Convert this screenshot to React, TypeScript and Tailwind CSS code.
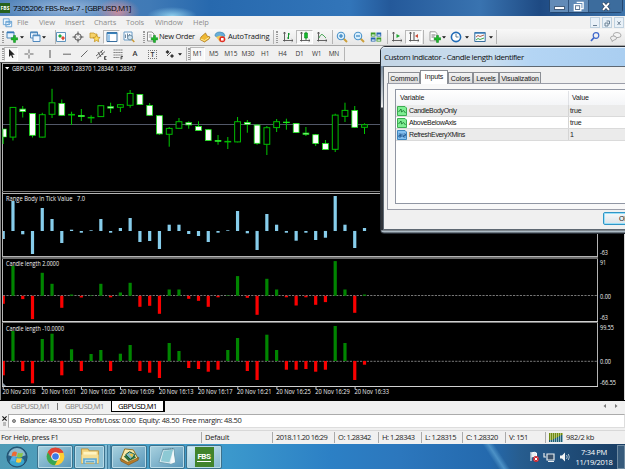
import type { ReactNode } from "react";

// [bodyTop, bodyBottom, high, low, filled]
const CANDLES: [number, number, number, number, number][] = [
  [129, 137, 129, 144, 1],
  [107, 137.5, 107, 140.5, 0],
  [108.7, 112, 106, 117.5, 1],
  [113, 135.7, 113, 137.5, 1],
  [114.3, 137.5, 112.8, 137.5, 0],
  [102.4, 114.7, 88.8, 118, 0],
  [103, 115.7, 99.5, 115.7, 1],
  [114, 115.4, 111.7, 125, 0],
  [115, 117, 109, 121, 1],
  [117, 118, 115.3, 123, 0],
  [105.3, 117, 105.3, 117, 0],
  [106.3, 108.5, 102.7, 113, 1],
  [104.3, 107.7, 104.3, 112, 0],
  [93, 105.7, 90, 107.7, 0],
  [94, 105, 94, 105, 1],
  [105, 115.7, 103, 115.7, 1],
  [115.3, 134.3, 115.3, 134.8, 1],
  [128, 134.7, 127, 146.7, 0],
  [121.3, 128.7, 118, 128.7, 0],
  [122.3, 125.3, 121.3, 128.7, 1],
  [126, 131, 121.3, 131, 1],
  [129.3, 141, 129, 141, 1],
  [140, 141.7, 135, 144.7, 1],
  [141, 142, 137, 149, 0],
  [121.3, 142.3, 117, 142.3, 0],
  [122, 124.7, 120, 132.7, 1],
  [124.7, 143.7, 124, 144.7, 1],
  [127.3, 144.7, 126, 155, 0],
  [121.3, 128, 119, 132, 0],
  [121.7, 123, 118.7, 129.7, 1],
  [123, 133, 123, 133, 1],
  [132.7, 134.7, 127, 136, 1],
  [134.3, 144, 134, 146, 1],
  [143, 150, 140, 150, 1],
  [114.7, 149.7, 113.7, 152, 0],
  [110, 116.7, 102.7, 122, 0],
  [110, 127.7, 106, 127.7, 1],
  [124.3, 127.7, 123.3, 134, 0],
];

const RANGE = [
  -8, 30, -3.3, -23, 23, 12, -12, 1.3, -1.7, 0.7, 12, -1.7, 3, 13, -11, -10, -18, 6.3, 6.3, -3, -5, -11, -1.7, 0.7, 20,
  -2.3, -19, 17, 6.3, -1.7, -9.7, -1.7, -9, -6.7, 35, 6.3, -17, 3,
];

const LENGTHS = [
  -8, 30, -3.3, -23.3, 23, 12, -12, 1.3, -1.7, 0.5, 12, -1.5, 3.3, 13, -11, -10, -18, 6.3, 6.3, -3, -5, -11, -1.5, 0.5,
  19.7, -2, -19, 17, 6.3, -1.5, -9.7, -1.5, -9, -6.3, 34.7, 6.3, -17, 1.3,
];

const LENGTHS_NEG = [
  -14.3, 30, -10, -22.3, 22, 27.3, -14.3, 11.7, -10, 7, 11, -10, 7.3, 16, -10, -11.7, -17, 18, 10, -7, -8, -10.7, -8.7,
  11, 23, -10, -19, 26.3, 11, -8.7, -8.7, -8, -10.7, -8.7, 35, 18, -19, -3.7,
];

const TIMES = ["2018", "16:01", "16:05", "16:09", "16:13", "16:17", "16:21", "16:25", "16:29", "16:33"];

const barX = (i: number) => 3.2 + i * 9.765;

function Bars({ data, base, up, down }: { data: number[]; base: number; up: string; down: string }) {
  return (
    <g>
      {data.map((v, i) => (
        <rect
          key={i}
          x={i === 0 ? 3 : barX(i) - 1.6}
          width={i === 0 ? 1.8 : 3.2}
          y={v > 0 ? base - v : base}
          height={Math.abs(v)}
          fill={v > 0 ? up : down}
        />
      ))}
    </g>
  );
}

function Label({ x, y, w, children }: { x: number; y: number; w: number; children: string }) {
  return (
    <text x={x} y={y} textLength={w} lengthAdjust="spacingAndGlyphs" fill="#f0f0f0" fontSize="6.6" className="whitespace-pre">
      {children}
    </text>
  );
}

function Chart() {
  return (
    <svg
      viewBox="0 62 625 338"
      className="block h-[338px] w-[625px] shrink-0 bg-black font-['Open_Sans',sans-serif] font-medium"
    >
      <rect x="0" y="62" width="1" height="338" fill="#8b8b8b" />
      <rect x="624" y="62" width="1" height="338" fill="#d8d8d8" />
      <rect x="0" y="62" width="625" height="1" fill="#555" />
      <g fill="#b4b4b4">
        <rect x="2" y="63" width="596" height="1" />
        <rect x="2" y="63" width="1" height="324" />
        <rect x="597" y="63" width="1" height="324" />
        <rect x="2" y="191" width="596" height="1" fill="#777" />
        <rect x="2" y="193" width="596" height="1" />
        <rect x="2" y="256" width="596" height="1" />
        <rect x="2" y="257" width="596" height="1" fill="#6b6b6b" />
        <rect x="2" y="258" width="596" height="1" fill="#6b6b6b" />
        <rect x="2" y="321" width="596" height="1" fill="#d0d0d0" />
        <rect x="2" y="322" width="596" height="1" fill="#777" />
        <rect x="2" y="386" width="596" height="1" fill="#d0d0d0" />
      </g>
      <rect x="3" y="124" width="594" height="1" fill="#525868" />
      <path d="M5 67h4.4l-2.2 2.400z" fill="#fff" />
      <Label x={12} y={71.2} w={124}>GBPUSD,M1   1.28360 1.28370 1.28346 1.28367</Label>

      {CANDLES.map(([top, bottom, high, low, filled], i) => {
        const x = barX(i);
        return (
          <g key={i}>
            <rect x={x - 0.5} y={high} width="1" height={low - high} fill="#00c800" />
            {i === 0 ? (
              <rect x="3" y={top} width="3.5" height={bottom - top} fill="#fff" stroke="#00d000" strokeWidth="0.6" />
            ) : (
              <rect
                x={x - 2.9}
                y={top + 0.4}
                width="5.8"
                height={Math.max(bottom - top - 0.8, 0.5)}
                fill={filled ? "#fff" : "#000"}
                stroke={filled ? "#19e619" : "#00bd00"}
                strokeWidth={filled ? 0.8 : 1}
              />
            )}
          </g>
        );
      })}

      <Bars data={RANGE} base={231} up="#87cdeb" down="#87cdeb" />
      <Label x={6} y={201.3} w={79}>Range Body in Tick Value   7.0</Label>

      <path d="M3 295.5H598" stroke="#777" strokeWidth="1" strokeDasharray="2.2 1.2" />
      <Bars data={LENGTHS} base={295.8} up="#008500" down="#fa0000" />
      <Label x={6} y={266} w={53}>Candle length 2.0000</Label>

      <path d="M3 361.3H598" stroke="#777" strokeWidth="1" strokeDasharray="2.2 1.2" />
      <Bars data={LENGTHS_NEG} base={361} up="#008500" down="#fa0000" />
      <Label x={6} y={330.6} w={58}>Candle length -10.0000</Label>

      <path d="M3 383l3 3H3z" fill="#8797a8" />
      {TIMES.map((t, i) => (
        <g key={t}>
          <rect x={2.7 + i * 39.1} y="386" width="1" height="3" fill="#c8c8c8" />
          <Label x={2.5 + i * 39.1} y={394.3} w={i ? 34.5 : 33}>{`20 Nov ${t}`}</Label>
        </g>
      ))}

      <Label x={600} y={255.3} w={8}>-63</Label>
      <Label x={600} y={265.2} w={6}>91</Label>
      <Label x={600} y={298.5} w={11}>0.00</Label>
      <Label x={600} y={320} w={8}>-63</Label>
      <Label x={600} y={329.7} w={14}>99.55</Label>
      <Label x={600} y={363.7} w={11}>0.00</Label>
      <Label x={600} y={384.7} w={16}>-66.55</Label>
    </svg>
  );
}

function Ico({ children, wide, boxed }: { children: ReactNode; wide?: boolean; boxed?: boolean }) {
  return (
    <span
      className={`flex h-[14px] shrink-0 items-center justify-center ${wide ? "w-[14px]" : "w-[17px]"} ${
        boxed ? "border border-[#b9b9b9] border-r-white border-b-white bg-[#f8f8f8]" : ""
      }`}
    >
      <svg viewBox="0 0 12 12" className="h-3 w-3 shrink-0" fill="none">
        {children}
      </svg>
    </span>
  );
}

function Caret() {
  return (
    <svg viewBox="0 0 4 3" className="h-[3px] w-1 shrink-0">
      <path d="M0 .3h4L2 2.6z" fill="#111" />
    </svg>
  );
}

const Grip = () => <span className="h-3 w-[2px] shrink-0 border-x border-dotted border-[#9b9b9b]" />;
const Sep = () => <span className="h-[14px] w-px shrink-0 bg-[#b5b5b5]" />;

const Plus = () => <path d="M7.5 4.5h2v2.2h2.2v2.2H9.5v2.5h-2V8.900H5.200V6.700h2.300z" fill="#20b82b" stroke="#08831a" strokeWidth=".5" />;
const Axes = () => <path d="M2.500 1v9.500M1 9.500h10M1.500 2.500l1-1.500 1 1.500M9.700 8.300l1.300 1.200-1.300 1.200" stroke="#555" strokeWidth=".9" />;

function Toolbar() {
  return (
    <div className="flex h-[17px] shrink-0 items-center border-b border-[#a8a8a8] bg-gradient-to-b from-[#f8f8f8] to-[#e6e6e6] text-[7.5px] font-medium text-[#151515]">
      <div className="flex w-[55px] shrink-0 items-center pl-[2px]">
        <Grip />
        <span className="w-px" />
        <Ico wide>
          <path d="M1 1h7v6H1z" fill="#e6f3ff" stroke="#4984b6" />
          <path d="M1 1.500h7" stroke="#377aba" strokeWidth="1.500" />
          <Plus />
        </Ico>
        <span className="w-px" />
        <Caret />
        <span className="w-1" />
        <Ico wide>
          <path d="M1.500 1h7v6h-7z" fill="#eef6ff" stroke="#5189bd" />
          <path d="M4 4h7v6.500H4z" fill="#eef6ff" stroke="#5189bd" />
          <path d="M1.500 1.500h7M4 4.700h7" stroke="#528cc0" strokeWidth="1.300" />
        </Ico>
        <Caret />
      </div>
      <Sep />
      <div className="-ml-[2px] flex w-[89px] shrink-0 items-center">
        <Ico wide>
          <path d="M1.500 1.500h9v9h-9z" fill="#f7fbff" stroke="#5f94bc" />
          <path d="M3 5l2-2 2 2-2 2z" fill="#20a93b" />
          <path d="M6 7l2-2 2 2-2 2.500z" fill="#e14a31" />
        </Ico>
        <span className="w-px" />
        <Ico>
          <circle cx="6" cy="6" r="3.300" stroke="#555" />
          <path d="M6 .5v4M6 7.500v4M.5 6h4M7.500 6h4" stroke="#555" />
        </Ico>
        <Ico>
          <path d="M1 2h4l1 1h2v4H1z" fill="#f6d36b" stroke="#bc8d21" strokeWidth=".7" />
          <path d="M7.500 4l1.100 2.200 2.500.3-1.900 1.700.5 2.500-2.200-1.200-2.200 1.200.5-2.500-1.900-1.700 2.500-.3z" fill="#ffdc5e" stroke="#bd8b1a" strokeWidth=".7" />
        </Ico>
        <Ico boxed>
          <path d="M1 1.500h10v9H1z" fill="#fff" stroke="#386e9f" />
          <path d="M1 2.300h10" stroke="#3981ba" strokeWidth="1.500" />
          <path d="M1.500 3.500H4V10H1.500z" fill="#9bc7ea" />
        </Ico>
        <Ico>
          <path d="M1 1h8v8H1z" fill="#f7fbff" stroke="#6b9cc6" />
          <path d="M2.500 7V3.500M4.500 7.500V2.500M6.500 6V3" stroke="#71899e" />
          <circle cx="7" cy="6.500" r="2.400" fill="#cce4f1" stroke="#6c8ca5" />
          <path d="M9 8.500l2.300 2.500" stroke="#cc9a34" strokeWidth="1.500" />
        </Ico>
      </div>
      <Grip />
      <Ico wide>
        <path d="M1.500 1H6l2 2v7H1.500z" fill="#fff" stroke="#777" strokeWidth=".8" />
        <path d="M2.800 4h3M2.800 6h3" stroke="#777" strokeWidth=".7" />
        <Plus />
      </Ico>
      <span className="w-[37px] shrink-0 whitespace-nowrap tracking-[-0.28px]">New Order</span>
      <Ico>
        <path d="M2 6l4.500-4 1.500 3 3 1-1 2-4.500 3L1 8.500z" fill="#efb934" stroke="#a66f0e" strokeWidth=".7" />
        <path d="M1.500 8l4 1.500L10 6.500" stroke="#fff0a5" strokeWidth=".9" />
      </Ico>
      <Ico wide>
        <path d="M1 5q0-4 5-4 4.500 0 5 4L6 7z" fill="#67aed9" stroke="#4089b5" strokeWidth=".7" />
        <path d="M2 6l4-1.500L10 6 6 11z" fill="#efc85c" />
        <circle cx="8.300" cy="8.300" r="3" fill="#e02f24" />
        <rect x="7" y="7" width="2.600" height="2.600" fill="#fff" />
      </Ico>
      <span className="ml-px w-[45px] shrink-0 whitespace-nowrap tracking-[-0.15px]">AutoTrading</span>
      <Sep />
      <span className="w-[2px]" />
      <Grip />
      <span className="w-[1px]" />
      <Ico>
        <Axes />
        <path d="M6.500 2v6M6.500 3H8M5 7h1.500" stroke="#13952e" />
      </Ico>
      <Ico boxed>
        <Axes />
        <path d="M7 .8v8" stroke="#087c1b" />
        <path d="M5.500 2h3v5h-3z" fill="#14bb2d" stroke="#087c1b" strokeWidth=".5" />
      </Ico>
      <Ico>
        <Axes />
        <path d="M3 7q2-5 4-3l3 3" stroke="#4da75a" />
      </Ico>
      <span className="w-[2px]" />
      <Sep />
      {[0, 1].map((n) => (
        <Ico key={n}>
          <path d="M7.500 7.500l3.500 3.500" stroke="#cda03b" strokeWidth="2" />
          <circle cx="5" cy="5" r="3.700" fill="#d8effc" stroke="#4d93ca" strokeWidth="1.100" />
          <path d={n ? "M3 5h4" : "M3 5h4M5 3v4"} stroke="#2978bb" strokeWidth="1.100" />
        </Ico>
      ))}
      <Ico>
        <path d="M.8 1.500h4.700v4H.8zM6.500 6.500h4.700v4H6.500z" fill="#3c9b23" />
        <path d="M6.500 1.500h4.700v4H6.500zM.8 6.500h4.700v4H.8z" fill="#2464ae" />
        <path d="M1.700 3.500h3v1.200h-3zM7.400 3.500h3v1.200h-3zM1.700 8.500h3v1.200h-3zM7.400 8.500h3v1.200h-3z" fill="#eaf6fb" />
      </Ico>
      <span className="w-[3px]" />
      <Sep />
      <Ico>
        <Axes />
        <path d="M5.500 3l3.500 2-3.500 2z" fill="#21aa33" />
      </Ico>
      <Ico boxed>
        <Axes />
        <path d="M6 1v8" stroke="#555" />
        <path d="M7 5l3-2v4z" fill="#ce4b36" />
      </Ico>
      <span className="w-px" />
      <Sep />
      <span className="w-1" />
      <Ico wide>
        <path d="M1 .8h5.500l1.500 2v7H1z" fill="#fff" stroke="#888" strokeWidth=".8" />
        <path d="M2.500 4h4M2.500 6h3" stroke="#777" />
        <Plus />
      </Ico>
      <Caret />
      <span className="w-[3px]" />
      <Ico wide>
        <circle cx="6" cy="6" r="4.600" fill="#fff" stroke="#216cb7" strokeWidth="1.600" />
        <path d="M6 3v3h2.500" stroke="#4f7084" strokeWidth=".9" />
      </Ico>
      <span className="w-[2px]" />
      <Caret />
      <span className="w-1" />
      <Ico wide>
        <path d="M.8 1.500h10.400v9H.8z" fill="#f4faff" stroke="#386f9e" />
        <path d="M.8 2h10.400" stroke="#3b7cb7" strokeWidth="1.500" />
        <path d="M2 6l2-1.500 2 1L10 4" stroke="#b25d45" />
        <path d="M2 9l2-1.500 2 1L10 7" stroke="#40a84a" />
      </Ico>
      <span className="w-[2px]" />
      <Caret />
      <span className="w-[3px]" />
      <Sep />
      <span className="grow" />
      <Ico wide>
        <circle cx="7" cy="4.500" r="2.800" stroke="#3d67cb" strokeWidth="1.200" />
        <path d="M5 6.500l-3 3.500" stroke="#3d67cb" strokeWidth="1.700" />
      </Ico>
      <span className="w-[5px]" />
      <Ico>
        <path d="M3.500 3.500q0-2 3.500-2t4 2.500-3 2.500H7L5 8V6q-1.500-.8-1.500-2.500z" fill="#f4f4f4" stroke="#9a9a9a" strokeWidth=".8" />
        <path d="M.5 7q0-2 3-2t3 2-2.500 2L2 10.500V9Q.5 8.500.5 7z" fill="#eee" stroke="#999" strokeWidth=".8" />
      </Ico>
      <span className="w-px" />
    </div>
  );
}

function DrawBar() {
  return (
    <div className="flex h-4 shrink-0 items-center bg-[#f0f0f0] pl-[2px] text-[6.5px] font-medium tracking-[-0.1px] text-[#333]">
      <Grip />
      <Ico wide boxed>
        <path d="M4 1v8l2-2 1.300 3 1.200-.5L7.200 6.700h2.600z" fill="#222" />
      </Ico>
      <span className="w-[2px]" />
      <Ico>
        <path d="M6 1.500v3.700M6 6.800v3.700M1.500 6h3.700M6.800 6h3.700" stroke="#666" />
      </Ico>
      <span className="w-1" />
      <Ico>
        <path d="M6 2v8" stroke="#555" />
      </Ico>
      <Ico>
        <path d="M2 6.200h8" stroke="#666" />
      </Ico>
      <Ico>
        <path d="M3 9l6.500-6.500" stroke="#666" />
      </Ico>
      <Ico>
        <path d="M1 8l7-6M2 10.500l8-7M3 4l3 5M6 3l2 4" stroke="#444" strokeWidth=".8" />
        <path d="M11.500 8.500h-2v3h2M9.500 10h1.500" stroke="#333" strokeWidth=".8" />
      </Ico>
      <Ico>
        <path d="M1.500 2h9M1.500 4.500h9M1.500 7h9M1.500 9.500h6" stroke="#777" strokeDasharray="1.400 .5" />
        <path d="M9 11.500v-3h2M9 10h1.500" stroke="#333" strokeWidth=".8" />
      </Ico>
      <span className="w-[18px] text-center text-[7.5px] font-semibold leading-none">A</span>
      <span className="flex w-[17px] justify-center">
        <span className="h-[9px] w-[9px] border border-dotted border-[#777] text-center text-[7px] font-semibold leading-[7px]">T</span>
      </span>
      <Ico>
        <path d="M1.500 4l2-2 2 2-2 2zM6 8l2-2 2 2-2 2z" fill="#333" />
        <path d="M3 8l4-4" stroke="#555" />
      </Ico>
      <Caret />
      <span className="w-1" />
      <Sep />
      <span className="w-px" />
      <Grip />
      <span className="flex h-[14px] w-[15px] items-center justify-center border border-[#b9b9b9] border-r-white border-b-white bg-[#f8f8f8]">M1</span>
      {["M5", "M15", "M30", "H1", "H4", "D1", "W1", "MN"].map((t) => (
        <span key={t} className="w-[17.2px] text-center">
          {t}
        </span>
      ))}
      <span className="w-px" />
      <Sep />
    </div>
  );
}

function TitleBar() {
  return (
    <div className="flex h-4 shrink-0 items-center bg-[radial-gradient(ellipse_22px_14px_at_118px_12px,#c78e9f,transparent),radial-gradient(ellipse_70px_16px_at_65px_8px,#96b6dc,transparent),radial-gradient(ellipse_25px_9px_at_172px_16px,#8dcdec,transparent),linear-gradient(90deg,#4f81b7_0px,#407ab6_150px,#2769ae_210px,#3275b9_350px,#24599a_390px,#3973b0_480px,#1e4a83_540px,#3d74ab_625px)] text-[8px] font-medium text-black">
      <span className="flex h-[10px] w-[10px] shrink-0 items-center justify-center bg-[#26611c] text-[5px] font-bold text-white">FBS</span>
      <span className="ml-[3px] grow whitespace-nowrap tracking-[-0.46px]">7305206: FBS-Real-7 - [GBPUSD,M1]</span>
      <div className="mr-[2px] flex h-[13px] w-[74px] self-start rounded-b-sm border border-t-0 border-[#23466f]">
        <span className="flex w-[19px] items-end justify-center border-r border-[#31547d] bg-[#628bb7] pb-[2px]">
          <span className="h-[4px] w-[11px] border border-[#455f7c] bg-white" />
        </span>
        <span className="flex w-5 items-center justify-center border-r border-[#31547d] bg-[#628bb7]">
          <svg viewBox="0 0 12 12" className="h-[11px] w-[11px]" fill="none">
            <path d="M4 1.500h7v6.800H8.500" stroke="#fff" strokeWidth="1.500" />
            <path d="M1.500 4h7v6.500h-7zM4 6.500h2v1.500H4z" fill="#5c7694" stroke="#fff" strokeWidth="1.500" />
          </svg>
        </span>
        <span className="flex grow items-center justify-center bg-[#3c6c9d]">
          <svg viewBox="0 0 10 10" className="h-[9px] w-[10px]">
            <path d="M1.500 1l7 8M8.500 1l-7 8" stroke="#34475f" strokeWidth="3.600" />
            <path d="M1.700 1.300l6.600 7.400M8.300 1.300L1.700 8.700" stroke="#fff" strokeWidth="2.100" />
          </svg>
        </span>
      </div>
    </div>
  );
}

function MenuBar() {
  return (
    <div className="flex h-[13px] shrink-0 items-center bg-[#f1f1f1] text-[7.5px] leading-none tracking-[-0.12px] text-[#8d8d8d]">
      <svg viewBox="0 0 12 12" className="ml-[2px] h-[10px] w-[11px]" fill="none">
        <path d="M1 1h7v7H1zM4 4h7v6.500H4z" fill="#eef7ff" stroke="#5a9bd0" />
        <path d="M4 5h7M5 9l2-2 1 1 2-2" stroke="#5595c9" />
      </svg>
      <span className="ml-1 w-[22px]">File</span>
      <span className="w-[26px]">View</span>
      <span className="w-[29px]">Insert</span>
      <span className="w-[32px]">Charts</span>
      <span className="w-[29px]">Tools</span>
      <span className="w-[38px]">Window</span>
      <span className="grow">Help</span>
      <div className="mr-px flex gap-[2px]">
        {["M2 6.500h4", "M3.500 2h3v3h-1M2 4h3v3H2z", "M2.500 2.500l3 3.500M5.500 2.500l-3 3.500"].map((d) => (
          <span key={d} className="flex h-[11px] w-[10px] items-center justify-center border border-[#bfd1df] bg-[#e9f1f8]">
            <svg viewBox="0 0 8 8" className="h-2 w-2" fill="none">
              <path d={d} stroke="#6b8093" />
            </svg>
          </span>
        ))}
      </div>
    </div>
  );
}

const TABS: [string, string][] = [
  ["Common", "w-[32px]"],
  ["Inputs", "w-[28px]"],
  ["Colors", "w-[25px]"],
  ["Levels", "w-[26px]"],
  ["Visualization", "w-[42px]"],
];

const INPUTS: [string, string][] = [
  ["CandleBodyOnly", "true"],
  ["AboveBelowAxis", "true"],
  ["RefreshEveryXMins", "1"],
];

function IndicatorDialog() {
  return (
    <div className="absolute left-[380px] top-[46px] flex h-[188px] w-[260px] flex-col rounded-tl-[5px] rounded-bl-[4px] border border-[#252b33] bg-[linear-gradient(180deg,#a6cbed_0px,#9fc5e9_10px,#6d8fb5_17px,#8696a6_22px,#d7dadd_55px,#f2f2f2_60px,#35383d_61px,#30343a_183px,#cfdce4_184px,#8b9aa6_185px,#111_187px)] pl-[2px]">
      <div className="-ml-[2px] flex h-[19px] shrink-0 items-center whitespace-nowrap rounded-tl-[4px] border-t border-white/70 bg-[linear-gradient(90deg,#c3d5e5_0px,#c8ddef_110px,#b4d5f4_150px,#a8cdf0_260px)] pl-[3px] text-[8px] font-medium tracking-[-0.43px] text-[#101010]">
        Custom Indicator - Candle length Identifier
      </div>
      <div className="flex h-[164px] shrink-0 flex-col border border-[#5e6872] bg-[#f0f0f0] pl-[3px] pt-[3px] text-[7px] tracking-[-0.12px] text-[#161616] font-['Liberation_Sans',sans-serif]">
        <div className="flex h-[13px] shrink-0 items-end pl-px">
          {TABS.map(([name, width]) => (
            <span
              key={name}
              className={`flex shrink-0 items-center justify-center border border-b-0 border-[#8b8e94] ${width} ${
                name === "Inputs" ? "relative z-10 -mb-px h-[14px] bg-white pb-[2px]" : "h-[11px] bg-gradient-to-b from-[#f3f3f3] to-[#dcdcdc]"
              }`}
            >
              {name}
            </span>
          ))}
        </div>
        <div className="flex h-[127px] shrink-0 border border-[#9a9da8] bg-[#f8f8f8] pl-[7px] pt-[5px]">
          <div className="flex h-[115px] grow flex-col border border-[#9096a3] bg-white">
            <div className="flex h-[15px] shrink-0 items-center bg-gradient-to-b from-white to-[#f4f5f7]">
              <span className="w-[173px] border-r border-[#e0e2e6] pl-1 leading-[14px]">Variable</span>
              <span className="pl-[3px]">Value</span>
            </div>
            {INPUTS.map(([name, value], i) => (
              <div
                key={name}
                className={`flex h-3 shrink-0 items-center border-b border-[#dadada] ${i === 1 ? "bg-white" : "bg-[#ebebeb]"}`}
              >
                <span className="flex h-full w-[173px] items-center border-r border-[#d4d4d4] pl-px tracking-[-0.35px]">
                  <svg viewBox="0 0 10 10" className="mr-[2px] h-[10px] w-[10px]" fill="none">
                    <path d="M.5.5H8l1.500 1.500v7.500h-9z" fill={i === 2 ? "#83bfef" : "#7fee92"} stroke={i === 2 ? "#3e86c0" : "#3dab52"} />
                    <path
                      d={i === 2 ? "M1.800 4h2v3h-2V5.500h2M5 3.500V7M6.500 4h2v1.500h-2V7h2" : "M1.500 6l2.500-3 .5 3 2-1.500L8.500 7"}
                      stroke={i === 2 ? "#194e86" : "#126c2a"}
                      strokeWidth=".8"
                    />
                  </svg>
                  {name}
                </span>
                <span className="pl-px">{value}</span>
              </div>
            ))}
          </div>
        </div>
        <div className="ml-[216px] mt-[2px] flex h-[13px] w-10 shrink-0 items-center rounded-[2px] border border-[#2f95c6] bg-gradient-to-b from-[#f5f8fa] to-[#dce3e8] pl-[15px] shadow-[inset_0_0_0_1px_#9be0f8]">
          OK
        </div>
      </div>
    </div>
  );
}

function StatusBar() {
  const cells: [string, string][] = [
    ["Default", "w-[71px] tracking-[-0.2px]"],
    ["2018.11.20 16:29", "w-[62px] tracking-[-0.5px]"],
    ["O: 1.28342", "w-[44px] tracking-[-0.45px]"],
    ["H: 1.28343", "w-[43px] tracking-[-0.45px]"],
    ["L: 1.28315", "w-[41px] tracking-[-0.45px]"],
    ["C: 1.28320", "w-[43px] tracking-[-0.45px]"],
    ["V: 151", "w-[40px] tracking-[-0.4px]"],
  ];
  return (
    <div className="flex h-[14px] shrink-0 items-center border-t border-[#d8d8d8] bg-[#f0f0f0] text-[7.5px] font-medium text-[#1c1c1c]">
      <span className="w-[201px] pl-px tracking-[-0.28px]">For Help, press F1</span>
      {cells.map(([text, width]) => (
        <span key={text} className={`flex h-[11px] shrink-0 items-center whitespace-nowrap border-l border-[#aaa] pl-[3px] ${width}`}>
          {text}
        </span>
      ))}
      <span className="flex h-[11px] items-center border-l border-[#aaa] pl-[3px] tracking-[-0.3px]">
        <svg viewBox="0 0 15 9" className="mr-[2px] h-[9px] w-[15px] shrink-0" shapeRendering="crispEdges">
          {[7, 7, 6, 5, 4, 3, 2].map((h, i) => (
            <g key={i}>
              <rect x={i * 2} y="0" width="1" height={h} fill="#6f8a12" />
              <rect x={i * 2 + 1} y="0" width="1" height={h} fill="#b5c377" />
              <rect x={i * 2} y={h} width="1" height={9 - h} fill="#1f5f6f" />
              <rect x={i * 2 + 1} y={h} width="1" height={9 - h} fill="#8fb3c4" />
            </g>
          ))}
        </svg>
        982/2 kb
      </span>
    </div>
  );
}

function TaskButton({ children, active }: { children: ReactNode; active?: boolean }) {
  return (
    <span
      className={`flex h-6 w-9 shrink-0 items-center justify-center rounded-[2px] border border-[#3c718c] shadow-[inset_0_0_0_1px_#b8dbe8] ${
        active ? "bg-gradient-to-br from-[#d8eef5] to-[#82b7ce]" : "bg-gradient-to-br from-[#a9d2df] to-[#5796b9]"
      }`}
    >
      {children}
    </span>
  );
}

function Taskbar() {
  return (
    <div className="flex h-[25px] shrink-0 items-center overflow-hidden bg-[linear-gradient(57deg,transparent_0px,transparent_418px,#4c91c6_423px,transparent_428px),linear-gradient(90deg,#4f9bb6_0px,#4ba1c3_100px,#3b98cc_230px,#2c80c5_330px,#2c77bd_400px,#2469ad_490px,#275d8f_520px,#1f4c78_570px,#193d63_625px)]">
      <span className="flex w-[37px] justify-center pr-[4px]">
        <svg viewBox="0 0 24 24" className="h-[22px] w-[22px]">
          <circle cx="12" cy="12" r="11" fill="#285f84" stroke="#204a67" />
          <ellipse cx="12" cy="17" rx="8" ry="5" fill="#38a5cd" />
          <path d="M2.500 10a9.700 9.700 0 0 1 19 0q-9 4-19 0z" fill="#8db9cb" />
          <path d="M7 7q2.500-2 5 0l-1 4.500q-2-1.500-5 0z" fill="#ee6932" />
          <path d="M13 7.300q2.500 1.300 5.500 0l-1 4.700q-2.500 1.200-5.500 0z" fill="#8ac744" />
          <path d="M5.800 12.500q2.500-1.600 5 0L9.800 17q-2.500-1.500-5 0z" fill="#55aee5" />
          <path d="M11.800 13q2.500 1.300 5.500 0l-1 4.500q-2.500 1.500-5.500 0z" fill="#ffcc35" />
        </svg>
      </span>
      <TaskButton>
        <svg viewBox="0 0 20 20" className="h-[19px] w-[19px]">
          <circle cx="10" cy="10" r="9.300" fill="#ffce32" />
          <path d="M10 10L1.900 5.400A9.300 9.300 0 0 1 18.300 6H10z" fill="#e6402f" />
          <path d="M10 10L1.900 5.400A9.300 9.300 0 0 0 9.300 19.300L13 12z" fill="#37a652" />
          <path d="M10 5.800h8.300A9.300 9.300 0 0 0 1.900 5.400L6 12z" fill="#df4435" />
          <circle cx="10" cy="10" r="4.500" fill="#fff" />
          <circle cx="10" cy="10" r="3.500" fill="#3d7be5" />
        </svg>
      </TaskButton>
      <span className="w-[1px]" />
      <span className="flex h-6 w-[31px] shrink-0 items-center justify-center rounded-[2px] border border-[#3c718c] bg-[#8cc0d5] shadow-[inset_0_0_0_1px_#b8dbe8]">
        <svg viewBox="0 0 22 20" className="h-[19px] w-[22px]">
          <path d="M2 2h7l1 2h10v13H2z" fill="#f2d27b" stroke="#ba9646" />
          <path d="M4 5h14v7H4z" fill="#fff4c1" />
          <path d="M2 8h18v9H2z" fill="#f5df96" />
          <path d="M5 18v-5h12v5M5 15h12" fill="none" stroke="#62a9d1" strokeWidth="2.500" />
          <path d="M6 17v-3h10v3" fill="none" stroke="#c7e7f5" />
        </svg>
      </span>
      <span className="h-6 w-[3px] border-r border-[#417e9e] bg-[#86bdd5]" />
      <span className="h-6 w-[3px] border-r border-[#417e9e] bg-[#6eabc8]" />
      <TaskButton>
        <svg viewBox="0 0 22 20" className="h-[19px] w-[21px]">
          <path d="M6 2l9 1 5 9-10 6-8-6z" fill="#f7e7a7" stroke="#8b6d21" />
          <path d="M1 12l8 4 12-5-1 3-10 5-8-4z" fill="#b87b28" stroke="#68440f" strokeWidth=".5" />
          <path d="M5 10l7-5 6 6-8 4z" fill="#2d7140" />
          <path d="M7 8l4-3 6 3-5 5z" fill="#80bac5" stroke="#145034" />
          <path d="M10 7l4 4 1-4z" fill="#e6c344" />
        </svg>
      </TaskButton>
      <span className="w-[2px]" />
      <TaskButton>
        <svg viewBox="0 0 20 20" className="h-[19px] w-[19px]">
          <path d="M5 3l12-1 1 14-5 2-12-2z" fill="#dcecf2" stroke="#6f9eaf" />
          <path d="M6 4l10-1-4 13-9-1z" fill="#8dc9d4" />
          <path d="M16 3l2 13-5 2z" fill="#f4f9fa" />
          <path d="M5 2.500l12-1" stroke="#486f80" strokeDasharray="1 1" />
        </svg>
      </TaskButton>
      <span className="w-[1px]" />
      <TaskButton active>
        <span className="flex h-[20px] w-[19px] items-center justify-center bg-[#41842b]">
          <span className="border-b border-white text-[8px] font-bold leading-[9px] tracking-[-0.4px] text-white font-['Roboto',sans-serif]">FBS</span>
        </span>
      </TaskButton>
      <span className="grow" />
      <svg viewBox="0 0 42 12" className="mr-1 h-3 w-[42px]" fill="none">
        <path d="M2 1v9M2.500 2q3-1.500 5 0v4q-2-1.500-5 0" fill="#e8eef3" stroke="#fff" />
        <circle cx="7" cy="8" r="2.900" fill="#d22c34" />
        <path d="M5.700 6.700l2.600 2.600M8.300 6.700L5.700 9.300" stroke="#fff" />
        <path d="M18 3h7v6h-7zM19 10.500h6M15 2v4h2" fill="#39516b" stroke="#e5ebef" strokeWidth="1.200" />
        <path d="M31 4.500h2l3-3v9l-3-3h-2z" fill="#f4f5f6" />
        <path d="M37.500 4q1.500 2 0 4M39.300 3q2 3 0 6" stroke="#b8c7d4" strokeWidth=".9" />
      </svg>
      <div className="w-[38px] whitespace-nowrap text-center text-[7.5px] font-medium leading-[10px] tracking-[-0.3px] text-white">
        <div>7:34 PM</div>
        <div>11/19/2018</div>
      </div>
      <span className="ml-1 h-6 w-2 border border-[#6e8aa1] bg-[#365a7b]" />
    </div>
  );
}

export default function App() {
  return (
    <div className="relative flex h-[469px] w-[625px] flex-col overflow-hidden bg-[#f0f0f0] font-['Open_Sans',sans-serif] leading-none">
      <TitleBar />
      <MenuBar />
      <Toolbar />
      <DrawBar />
      <Chart />
      <div className="flex h-3 shrink-0 items-start border-t border-black bg-[#f0f0f0] text-[7.5px] leading-[11px] tracking-[-0.42px] text-[#858585] font-['Noto_Sans',sans-serif]">
        <span className="w-[57px] pl-[11px]">GBPUSD,M1</span>
        <span className="mt-[2px] h-[7px] w-px bg-[#777]" />
        <span className="w-[53px] pl-[7px]">GBPUSD,M1</span>
        <span className="h-3 w-[54px] border-2 border-t-0 border-l border-black bg-white pl-[6px] leading-[10px] text-black">
          GBPUSD,M1
        </span>
        <span className="grow" />
        <svg viewBox="0 0 20 6" className="mr-1 mt-[2px] h-[6px] w-5">
          <path d="M5 1v4L2.500 3zM14 1v4l2.500-2z" fill="#777" />
        </svg>
      </div>
      <div className="flex h-[18px] shrink-0 items-center bg-[#f0f0f0]">
        <div className="flex w-2 flex-col items-center gap-px">
          <svg viewBox="0 0 6 6" className="h-[5px] w-[5px]">
            <path d="M.5.5l5 5M5.500.5l-5 5" stroke="#111" strokeWidth="1.300" />
          </svg>
          <span className="h-1 w-[3px] bg-[#bbb]" />
        </div>
        <div className="flex h-[14px] grow items-center border border-[#ababab] border-r-[#ddd] border-b-[#ddd] bg-white pl-[3px] text-[7.5px] font-medium tracking-[-0.33px] text-[#1c1c1c]">
          <span className="mr-1 h-1 w-1 rounded-full border border-[#777] bg-[#aaa]" />
          <span className="whitespace-pre">Balance: 48.50 USD  Profit/Loss: 0.00  Equity: 48.50  Free margin: 48.50</span>
        </div>
      </div>
      <StatusBar />
      <Taskbar />
      <IndicatorDialog />
    </div>
  );
}
